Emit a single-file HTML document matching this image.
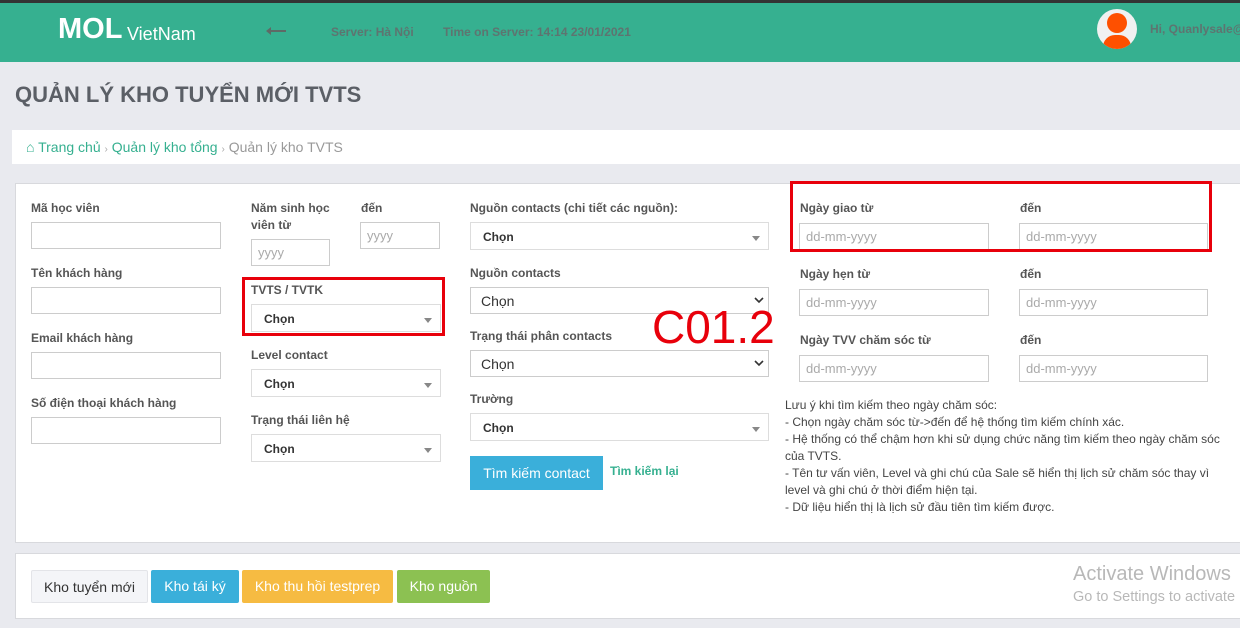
<!DOCTYPE html>
<html><head><meta charset="utf-8"><style>
*{box-sizing:border-box;margin:0;padding:0}
body{width:1240px;height:628px;overflow:hidden;background:#e9eaef;font-family:"Liberation Sans",Arial,sans-serif;position:relative;color:#444}
.a{position:absolute;white-space:nowrap}
.lbl{position:absolute;font-size:12px;font-weight:bold;color:#555;line-height:17px}
.in{position:absolute;height:27px;border:1px solid #ccc;background:#fff;font-size:13px;color:#aaa;padding:5px 6px}
.sel{position:absolute;height:28px;border:1px solid #ddd;background:#fff;font-size:12px;font-weight:bold;color:#333;padding:7px 12px}
.sel:after{content:"";position:absolute;right:8px;top:13px;border:4px solid transparent;border-top:5px solid #888}
.ns{position:absolute;height:27px;border:1px solid #ccc;background:#fff;font-size:14px;color:#333;padding:5px 10px}
.ns svg{position:absolute;right:4px;top:9px}
.red{position:absolute;border:3px solid #e8000b}
.btn{position:absolute;top:570px;height:33px;font-size:14px;line-height:33px;text-align:center;border-radius:2px;color:#fff}
</style></head><body>
<div class="a" style="left:0;top:0;width:1240px;height:3px;background:#333"></div>
<div class="a" style="left:0;top:3px;width:1240px;height:59px;background:#36b090"></div>
<div class="a" style="left:58px;top:13px;font-size:29px;font-weight:bold;color:#fff">MOL</div>
<div class="a" style="left:127px;top:24px;font-size:18px;color:#fff">VietNam</div>
<svg class="a" style="left:266px;top:27px" width="20" height="8"><path d="M0 4l5-4v3h15v2H5v3z" fill="#5e6a66"/></svg>
<div class="a" style="left:331px;top:25px;font-size:12px;font-weight:bold;color:#5e7470">Server: Hà Nội</div>
<div class="a" style="left:443px;top:25px;font-size:12px;font-weight:bold;color:#5e7470">Time on Server: 14:14 23/01/2021</div>
<div class="a" style="left:1097px;top:9px;width:40px;height:40px;border-radius:50%;background:#f1f1f1;overflow:hidden">
<div class="a" style="left:10px;top:4px;width:20px;height:20px;border-radius:50%;background:#fe5000"></div>
<div class="a" style="left:6px;top:26px;width:28px;height:20px;border-radius:12px 12px 0 0;background:#fe5000"></div></div>
<div class="a" style="left:1150px;top:22px;font-size:12px;font-weight:bold;color:#5e7470">Hi, Quanlysale@</div>
<div class="a" style="left:15px;top:82px;font-size:22px;font-weight:bold;color:#5b5f66">QUẢN LÝ KHO TUYỂN MỚI TVTS</div>
<div class="a" style="left:12px;top:130px;width:1228px;height:34px;background:#fff"></div>
<div class="a" style="left:26px;top:139px;font-size:14px;color:#36b090">⌂ Trang chủ <span style="color:#aaa;font-size:10px">›</span> Quản lý kho tổng <span style="color:#aaa;font-size:10px">›</span> <span style="color:#999">Quản lý kho TVTS</span></div>
<div class="a" style="left:15px;top:183px;width:1230px;height:360px;background:#fff;border:1px solid #d8d9dd"></div>
<div class="lbl" style="left:31px;top:200px">Mã học viên</div><div class="in" style="left:31px;top:222px;width:190px"></div>
<div class="lbl" style="left:31px;top:265px">Tên khách hàng</div><div class="in" style="left:31px;top:287px;width:190px"></div>
<div class="lbl" style="left:31px;top:330px">Email khách hàng</div><div class="in" style="left:31px;top:352px;width:190px"></div>
<div class="lbl" style="left:31px;top:395px">Số điện thoại khách hàng</div><div class="in" style="left:31px;top:417px;width:190px"></div>
<div class="lbl" style="left:251px;top:200px;width:90px">Năm sinh học viên từ</div>
<div class="lbl" style="left:361px;top:200px">đến</div>
<div class="in" style="left:251px;top:239px;width:79px">yyyy</div>
<div class="in" style="left:360px;top:222px;width:80px">yyyy</div>
<div class="lbl" style="left:251px;top:282px">TVTS / TVTK</div><div class="sel" style="left:251px;top:304px;width:190px">Chọn</div>
<div class="red" style="left:242px;top:277px;width:203px;height:59px"></div>
<div class="lbl" style="left:251px;top:347px">Level contact</div><div class="sel" style="left:251px;top:369px;width:190px">Chọn</div>
<div class="lbl" style="left:251px;top:412px">Trạng thái liên hệ</div><div class="sel" style="left:251px;top:434px;width:190px">Chọn</div>
<div class="lbl" style="left:470px;top:200px">Nguồn contacts (chi tiết các nguồn):</div><div class="sel" style="left:470px;top:222px;width:299px">Chọn</div>
<div class="lbl" style="left:470px;top:265px">Nguồn contacts</div><div class="ns" style="left:470px;top:287px;width:299px">Chọn<svg width="10" height="7"><path d="M1 1l4 4 4-4" stroke="#333" stroke-width="1.6" fill="none"/></svg></div>
<div class="lbl" style="left:470px;top:328px">Trạng thái phân contacts</div><div class="ns" style="left:470px;top:350px;width:299px">Chọn<svg width="10" height="7"><path d="M1 1l4 4 4-4" stroke="#333" stroke-width="1.6" fill="none"/></svg></div>
<div class="lbl" style="left:470px;top:391px">Trường</div><div class="sel" style="left:470px;top:413px;width:299px">Chọn</div>
<div class="a" style="left:470px;top:456px;width:133px;height:34px;background:#3aafda;color:#fff;font-size:14px;line-height:34px;text-align:center">Tìm kiếm contact</div>
<div class="a" style="left:610px;top:464px;font-size:12px;font-weight:bold;color:#36b090">Tìm kiếm lại</div>
<div class="a" style="left:652px;top:300px;font-size:46px;color:#e8000b;line-height:54px">C01.2</div>
<div class="lbl" style="left:800px;top:200px">Ngày giao từ</div><div class="lbl" style="left:1020px;top:200px">đến</div>
<div class="in" style="left:799px;top:223px;width:190px">dd-mm-yyyy</div><div class="in" style="left:1019px;top:223px;width:189px">dd-mm-yyyy</div>
<div class="red" style="left:790px;top:181px;width:422px;height:71px"></div>
<div class="lbl" style="left:800px;top:266px">Ngày hẹn từ</div><div class="lbl" style="left:1020px;top:266px">đến</div>
<div class="in" style="left:799px;top:289px;width:190px">dd-mm-yyyy</div><div class="in" style="left:1019px;top:289px;width:189px">dd-mm-yyyy</div>
<div class="lbl" style="left:800px;top:332px">Ngày TVV chăm sóc từ</div><div class="lbl" style="left:1020px;top:332px">đến</div>
<div class="in" style="left:799px;top:355px;width:190px">dd-mm-yyyy</div><div class="in" style="left:1019px;top:355px;width:189px">dd-mm-yyyy</div>
<div class="a" style="left:785px;top:397px;width:440px;font-size:12px;line-height:17px;color:#444;white-space:normal">Lưu ý khi tìm kiếm theo ngày chăm sóc:<br>- Chọn ngày chăm sóc từ-&gt;đến để hệ thống tìm kiếm chính xác.<br>- Hệ thống có thể chậm hơn khi sử dụng chức năng tìm kiếm theo ngày chăm sóc của TVTS.<br>- Tên tư vấn viên, Level và ghi chú của Sale sẽ hiển thị lịch sử chăm sóc thay vì level và ghi chú ở thời điểm hiện tại.<br>- Dữ liệu hiển thị là lịch sử đầu tiên tìm kiếm được.</div>
<div class="a" style="left:15px;top:553px;width:1230px;height:66px;background:#fff;border:1px solid #d8d9dd"></div>
<div class="btn" style="left:31px;width:117px;background:#f4f5f8;border:1px solid #e3e4e8;color:#333">Kho tuyển mới</div>
<div class="btn" style="left:151px;width:88px;background:#3aafda">Kho tái ký</div>
<div class="btn" style="left:242px;width:151px;background:#f6bb42">Kho thu hồi testprep</div>
<div class="btn" style="left:397px;width:93px;background:#8cc152">Kho nguồn</div>
<div class="a" style="left:1073px;top:563px;font-size:20px;color:#b8b8b8">Activate Windows</div>
<div class="a" style="left:1073px;top:589px;font-size:14.5px;color:#b8b8b8">Go to Settings to activate</div>
</body></html>
